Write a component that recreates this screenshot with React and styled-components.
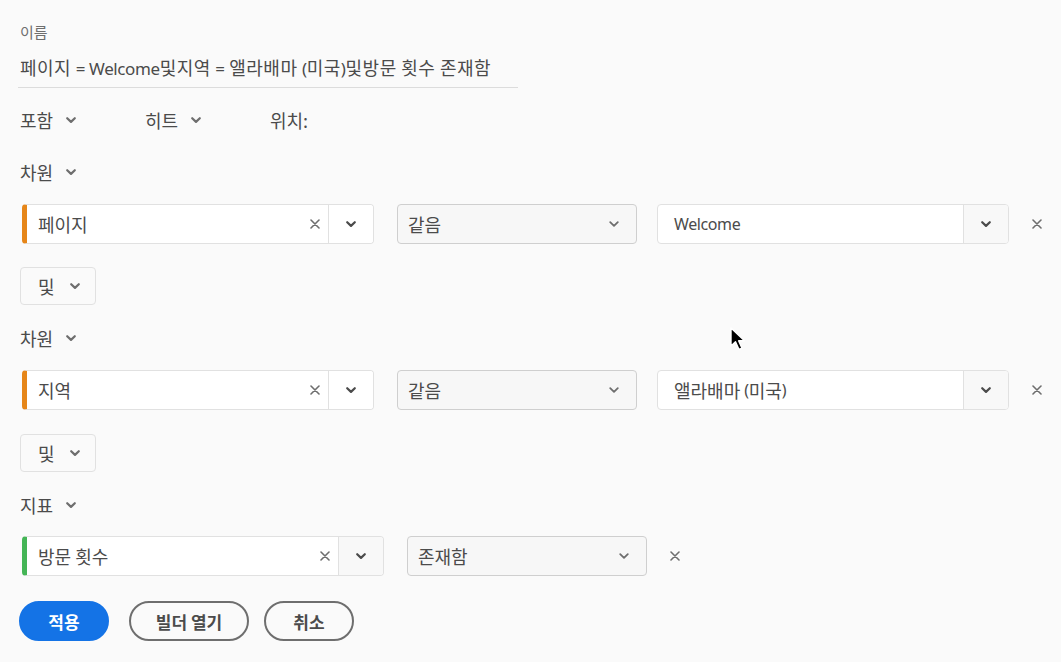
import React from "react";
import styled, { createGlobalStyle } from "styled-components";

const GlobalStyle = createGlobalStyle`
	html, body {
		margin: 0;
		padding: 0;
		background: #fafafa;
	}
	body {
		font-family: "Noto Sans CJK KR", "Noto Sans", "Liberation Sans", sans-serif;
		color: #4b4b4b;
	}
`;

const Chevron = ({ size = 12, color = "#4b4b4b", weight = 2.2 }) => (
	<svg width={size} height={size} viewBox="0 0 12 12" fill="none">
		<path
			d="M2.2 4.2 L6 7.9 L9.8 4.2"
			stroke={color}
			strokeWidth={weight}
			strokeLinecap="round"
			strokeLinejoin="round"
		/>
	</svg>
);

const Cross = ({ size = 10, color = "#6e6e6e" }) => (
	<svg width={size} height={size} viewBox="0 0 10 10" fill="none">
		<path d="M1 1 L9 9 M9 1 L1 9" stroke={color} strokeWidth="1.6" strokeLinecap="round" />
	</svg>
);

const Cursor = () => (
	<svg width="22" height="30" viewBox="0 0 22 30">
		<path
			d="M2 2 L2 20 L6.5 15.8 L10 23.5 L13 22.2 L9.6 14.8 L15.5 14.8 Z"
			fill="#000"
			stroke="#fff"
			strokeWidth="1.4"
			strokeLinejoin="round"
		/>
	</svg>
);

const Page = styled.div`
	position: relative;
	width: 1061px;
	height: 662px;
	box-sizing: border-box;
	padding: 22px 0 0 20px;
	background: #fafafa;
	overflow: hidden;
`;

const Latin = styled.span`
	font-family: "Noto Sans", "Liberation Sans", sans-serif;
	font-size: ${(p) => p.$size || 16}px;
	letter-spacing: -0.4px;
	line-height: 1;
`;

const NameLabel = styled.div`
	font-size: 15px;
	line-height: 20px;
	color: #6e6e6e;
`;

const NameField = styled.div`
	margin: 3px 0 0 -2px;
	width: 500px;
	height: 43px;
	box-sizing: border-box;
	padding: 10px 0 0 2px;
	border-bottom: 1px solid #dcdcdc;
	font-size: 18px;
	line-height: 24px;
	color: #4b4b4b;
	letter-spacing: 0.5px;
	white-space: nowrap;
	overflow: hidden;
`;

const OptionsRow = styled.div`
	display: flex;
	margin-top: 20px;
	height: 24px;
	align-items: center;
`;

const Picker = styled.div`
	display: flex;
	align-items: center;
	gap: 12px;
	width: ${(p) => p.$width || "auto"};
	font-size: 18px;
	line-height: 24px;
	color: #4b4b4b;
`;

const SectionHead = styled(Picker)`
	margin-top: ${(p) => p.$top}px;
	height: 24px;
`;

const FilterRow = styled.div`
	display: flex;
	align-items: center;
	margin-top: ${(p) => p.$top}px;
	padding-left: 2px;
	height: 40px;
`;

const FieldBox = styled.div`
	display: flex;
	width: ${(p) => p.$width}px;
	height: 40px;
	box-sizing: border-box;
	border: 1px solid #e1e1e1;
	border-left: ${(p) => (p.$accent ? `5px solid ${p.$accent}` : "1px solid #e1e1e1")};
	border-radius: 4px;
	background: #fff;
	overflow: hidden;
`;

const FieldText = styled.div`
	flex: 1;
	display: flex;
	align-items: center;
	padding-left: ${(p) => p.$pad || 11}px;
	font-size: 18px;
	color: #4b4b4b;
	white-space: nowrap;
`;

const ClearSlot = styled.div`
	display: flex;
	align-items: center;
	padding-right: 8px;
`;

const ChevronSlot = styled.div`
	display: flex;
	align-items: center;
	justify-content: center;
	width: 44px;
	border-left: 1px solid #e1e1e1;
	background: ${(p) => (p.$tint ? "#f8f8f8" : "#fff")};
`;

const Operator = styled.div`
	display: flex;
	align-items: center;
	justify-content: space-between;
	width: 240px;
	height: 40px;
	box-sizing: border-box;
	margin-left: 23px;
	padding: 0 16px 0 10px;
	border: 1px solid #cfcfcf;
	border-radius: 4px;
	background: #f7f7f7;
	font-size: 18px;
	color: #4b4b4b;
`;

const ValueBox = styled(FieldBox)`
	margin-left: 20px;
`;

const RemoveSlot = styled.div`
	display: flex;
	align-items: center;
	margin-left: 23px;
`;

const AndButton = styled.div`
	display: flex;
	align-items: center;
	gap: 14px;
	width: 76px;
	height: 38px;
	box-sizing: border-box;
	margin-top: ${(p) => p.$top}px;
	padding-left: 17px;
	border: 1px solid #e1e1e1;
	border-radius: 4px;
	background: #fafafa;
	font-size: 18px;
	color: #4b4b4b;
`;

const ButtonRow = styled.div`
	display: flex;
	align-items: center;
	margin-top: 25px;
	margin-left: -1px;
`;

const PillButton = styled.button`
	height: 40px;
	width: ${(p) => p.$width}px;
	margin-right: ${(p) => p.$gap || 0}px;
	box-sizing: border-box;
	border-radius: 20px;
	border: 2px solid ${(p) => (p.$primary ? "#1473e6" : "#6e6e6e")};
	background: ${(p) => (p.$primary ? "#1473e6" : "transparent")};
	color: ${(p) => (p.$primary ? "#fff" : "#4b4b4b")};
	font-family: "Noto Sans CJK KR", "Noto Sans", sans-serif;
	font-size: 17px;
	font-weight: 700;
	padding: 0;
	cursor: pointer;
`;

const CursorLayer = styled.div`
	position: absolute;
	left: 729px;
	top: 326px;
`;

const Section = ({ label, top }) => (
	<SectionHead $top={top}>
		{label}
		<Chevron size={12} color="#6e6e6e" />
	</SectionHead>
);

const DimensionRow = ({ top, name, value, accent }) => (
	<FilterRow $top={top}>
		<FieldBox $width={352} $accent={accent}>
			<FieldText>{name}</FieldText>
			<ClearSlot>
				<Cross />
			</ClearSlot>
			<ChevronSlot>
				<Chevron />
			</ChevronSlot>
		</FieldBox>
		<Operator>
			같음
			<Chevron size={12} color="#6e6e6e" weight={1.8} />
		</Operator>
		<ValueBox $width={352}>
			<FieldText $pad={16}>{value}</FieldText>
			<ChevronSlot $tint>
				<Chevron />
			</ChevronSlot>
		</ValueBox>
		<RemoveSlot>
			<Cross />
		</RemoveSlot>
	</FilterRow>
);

export default function App() {
	return (
		<>
			<GlobalStyle />
			<Page>
				<NameLabel>이름</NameLabel>
				<NameField>
					페이지 <Latin $size={17}>= Welcome</Latin>및지역 <Latin $size={17}>=</Latin> 앨라배마{" "}
					<Latin $size={17}>(</Latin>미국<Latin $size={17}>)</Latin>및방문 횟수 존재함
				</NameField>

				<OptionsRow>
					<Picker $width="125px">
						포함
						<Chevron size={12} color="#6e6e6e" />
					</Picker>
					<Picker $width="125px">
						히트
						<Chevron size={12} color="#6e6e6e" />
					</Picker>
					<Picker>위치:</Picker>
				</OptionsRow>

				<Section label="차원" top={28} />
				<DimensionRow top={20} name="페이지" value={<Latin>Welcome</Latin>} accent="#e68619" />
				<AndButton $top={23}>
					및
					<Chevron size={12} color="#6e6e6e" />
				</AndButton>

				<Section label="차원" top={21} />
				<DimensionRow
					top={20}
					name="지역"
					value={
						<>
							앨라배마&nbsp;<Latin>(</Latin>미국<Latin>)</Latin>
						</>
					}
					accent="#e68619"
				/>
				<AndButton $top={24}>
					및
					<Chevron size={12} color="#6e6e6e" />
				</AndButton>

				<Section label="지표" top={21} />
				<FilterRow $top={19}>
					<FieldBox $width={362} $accent="#44b556">
						<FieldText>방문 횟수</FieldText>
						<ClearSlot>
							<Cross />
						</ClearSlot>
						<ChevronSlot $tint>
							<Chevron />
						</ChevronSlot>
					</FieldBox>
					<Operator>
						존재함
						<Chevron size={12} color="#6e6e6e" weight={1.8} />
					</Operator>
					<RemoveSlot>
						<Cross />
					</RemoveSlot>
				</FilterRow>

				<ButtonRow>
					<PillButton $primary $width={90} $gap={20}>
						적용
					</PillButton>
					<PillButton $width={120} $gap={15}>
						빌더 열기
					</PillButton>
					<PillButton $width={90}>취소</PillButton>
				</ButtonRow>

				<CursorLayer>
					<Cursor />
				</CursorLayer>
			</Page>
		</>
	);
}
